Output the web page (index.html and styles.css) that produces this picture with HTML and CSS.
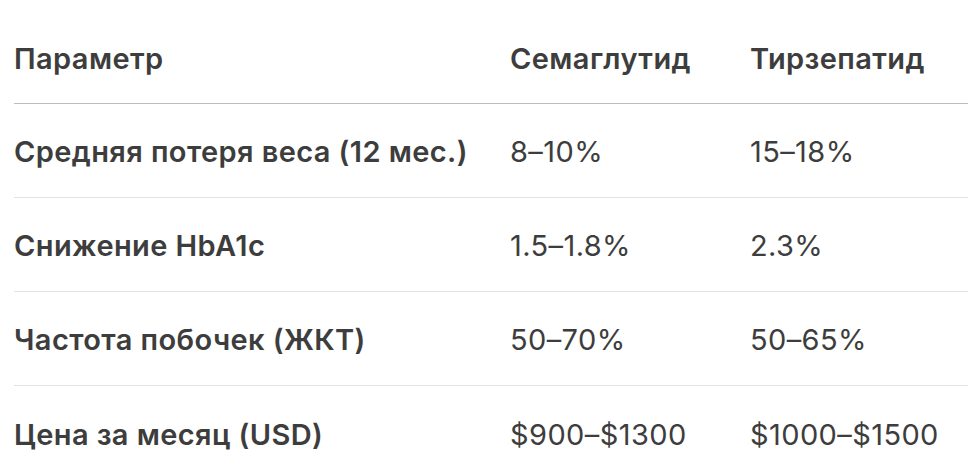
FILE: index.html
```html
<!DOCTYPE html>
<html lang="ru">
<head>
<meta charset="utf-8">
<link rel="stylesheet" href="styles.css">
</head>
<body>
<div class="table">
  <div class="row head">
    <div class="cell">Параметр</div>
    <div class="cell">Семаглутид</div>
    <div class="cell">Тирзепатид</div>
  </div>
  <div class="row">
    <div class="cell label">Средняя потеря веса (12 мес.)</div>
    <div class="cell">8–10%</div>
    <div class="cell">15–18%</div>
  </div>
  <div class="row">
    <div class="cell label">Снижение HbA1c</div>
    <div class="cell">1.5–1.8%</div>
    <div class="cell">2.3%</div>
  </div>
  <div class="row">
    <div class="cell label">Частота побочек (ЖКТ)</div>
    <div class="cell">50–70%</div>
    <div class="cell">50–65%</div>
  </div>
  <div class="row last">
    <div class="cell label">Цена за месяц (USD)</div>
    <div class="cell">$900–$1300</div>
    <div class="cell">$1000–$1500</div>
  </div>
</div>
</body>
</html>
```
FILE: styles.css
```css
html, body {
  margin: 0;
  background: #ffffff;
}
body {
  padding: 11px 1px 0 14px;
  font-family: Inter, "Liberation Sans", sans-serif;
  font-size: 29px;
  letter-spacing: 0.4px;
  color: #3d3d3d;
}
.table {
  display: flex;
  flex-direction: column;
}
.row {
  display: grid;
  grid-template-columns: 496px 240px 1fr;
  align-items: center;
  padding-top: 2px;
  box-sizing: border-box;
  height: 94px;
  border-bottom: 1px solid #e3e3e3;
}
.row.head {
  height: 93px;
  border-bottom: 1px solid #bdbdbd;
  font-weight: 600;
}
.row.last {
  border-bottom: none;
}
.cell {
  white-space: nowrap;
}
.label {
  font-weight: 600;
}
```
